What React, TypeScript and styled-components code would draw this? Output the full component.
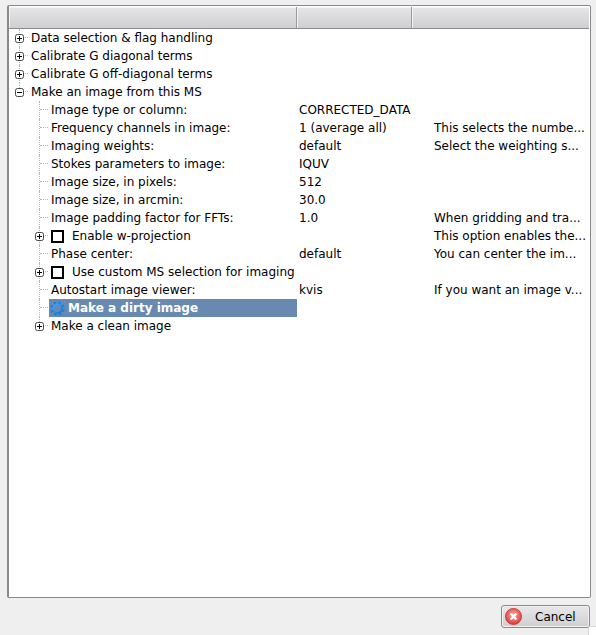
import React from "react";
import styled, { createGlobalStyle } from "styled-components";

const Global = createGlobalStyle`
  html, body { margin: 0; padding: 0; background: #efefef; }
  body { font-family: "DejaVu Sans", sans-serif; font-size: 12px; color: #000; }
`;

const Page = styled.div`
  width: 596px;
  height: 635px;
  box-sizing: border-box;
  padding: 5px 5px 0 7px;
  display: flex;
  flex-direction: column;
  overflow: hidden;
  position: relative;
`;

const Frame = styled.div`
  width: 584px;
  height: 593px;
  box-sizing: border-box;
  border: 1px solid #8a8a8a;
  border-left-width: 2px;
  border-radius: 2px;
  background: #fff;
  display: flex;
  flex-direction: column;
  padding: 1px 1px 0 0;
`;

const Header = styled.div`
  display: grid;
  grid-template-columns: 288px 115px 177px;
  height: 22px;
  flex: none;
  box-sizing: border-box;
  border-bottom: 1px solid #8c8c8c;
  border-right: 1px solid #8c8c8c;
`;

const HeaderCell = styled.div`
  background: linear-gradient(#e6e6e8, #cfcfd2);
  border-right: 1px solid #9a9a9a;
  box-shadow: inset 1px 1px 0 #f4f4f4;
  &:last-child { border-right: none; }
`;

const Body = styled.div`
  display: flex;
  flex-direction: column;
`;

const Row = styled.div`
  display: grid;
  grid-template-columns: 288px 135px 1fr;
  height: 18px;
  white-space: nowrap;
`;

const TreeCell = styled.div<{ $depth: number }>`
  display: flex;
  align-items: center;
  padding-left: ${(p) => (p.$depth === 0 ? 4 : 24)}px;
  position: relative;
`;

const Guide = styled.span<{ $left: number; $last?: boolean }>`
  position: absolute;
  left: ${(p) => p.$left}px;
  top: 0;
  bottom: ${(p) => (p.$last ? "9px" : "0")};
  border-left: 1px dotted #b4b4b4;
`;

const Slot = styled.span`
  width: 14px;
  height: 18px;
  flex: none;
  position: relative;
  display: inline-flex;
  align-items: center;
`;

const Stub = styled.span`
  position: absolute;
  left: 7px;
  width: 8px;
  top: 8px;
  border-top: 1px dotted #b4b4b4;
`;

const Label = styled.span<{ $selected?: boolean }>`
  margin-left: 4px;
  height: 18px;
  display: flex;
  align-items: center;
  flex: 1;
  position: relative;
  ${(p) =>
    p.$selected
      ? `background:#6889b0;color:#fff;font-weight:700;margin-left:2px;padding-left:1px;gap:3px;`
      : ""}
`;

const Check = styled.span`
  width: 9px;
  height: 9px;
  border: 2px solid #000;
  background: #fff;
  display: inline-block;
  margin-right: 8px;
  flex: none;
`;

const Value = styled.div`
  padding-left: 2px;
  display: flex;
  align-items: center;
`;

const Hint = styled.div`
  padding-left: 2px;
  display: flex;
  align-items: center;
`;

const Footer = styled.div`
  display: flex;
  justify-content: flex-end;
  padding: 7px 1px 0 0;
`;

const CancelButton = styled.button`
  width: 89px;
  height: 23px;
  box-sizing: border-box;
  border: 1px solid #8a8a8a;
  border-radius: 3px;
  background: linear-gradient(#e8e8ea, #cfcfd3);
  box-shadow: inset 0 0 0 1px #f2f2f2;
  display: flex;
  align-items: center;
  padding: 0 0 0 3px;
  font: 12px "DejaVu Sans", sans-serif;
  color: #000;
`;

const CancelText = styled.span`
  margin-left: 13px;
`;

const Grip = styled.div`
  position: absolute;
  right: 0;
  bottom: 0;
  width: 7px;
  height: 8px;
  background: #fff;
  border-top: 1px solid #d8d8d8;
  border-left: 1px solid #d8d8d8;
  border-top-left-radius: 2px;
`;

const ExpanderSvg = styled.svg`
  width: 9px;
  height: 9px;
  margin-left: 2px;
  position: relative;
  flex: none;
`;

const IconSvg = styled.svg`
  flex: none;
`;

const Expander = ({ open }: { open?: boolean }) => (
  <ExpanderSvg viewBox="0 0 9 9">
    <rect x="0.5" y="0.5" width="8" height="8" rx="2" fill="#fff" stroke="#444" />
    <path d={open ? "M2 4.5H7" : "M2 4.5H7M4.5 2V7"} stroke="#000" />
  </ExpanderSvg>
);

const GearIcon = () => (
  <IconSvg width="15" height="15" viewBox="0 0 16 16">
    <defs>
      <linearGradient id="gearFill" x1="0" y1="0" x2="1" y2="1">
        <stop offset="0" stopColor="#4cb0f6" />
        <stop offset="1" stopColor="#0f6fd6" />
      </linearGradient>
    </defs>
    <path
      fill="url(#gearFill)"
      fillRule="evenodd"
      d="M8 2.2A5.8 5.8 0 1 1 8 13.8A5.8 5.8 0 1 1 8 2.2ZM8 4.4A3.6 3.6 0 1 0 8 11.6A3.6 3.6 0 1 0 8 4.4Z"
    />
    <g fill="#1b82e4">
      {[20, 65, 110, 155, 200, 245, 290, 335].map((a) => (
        <rect key={a} x="6.5" y="0.3" width="3" height="2.4" transform={`rotate(${a} 8 8)`} />
      ))}
    </g>
  </IconSvg>
);

const CancelIcon = () => (
  <IconSvg width="17" height="17" viewBox="0 0 17 17">
    <defs>
      <radialGradient id="cancelFill" cx="0.5" cy="0.4" r="0.6">
        <stop offset="0" stopColor="#f9a5a0" />
        <stop offset="0.7" stopColor="#ea5a55" />
        <stop offset="1" stopColor="#cf3834" />
      </radialGradient>
    </defs>
    <circle cx="8.5" cy="8.5" r="8" fill="url(#cancelFill)" stroke="#c8403c" />
    <path d="M5.5 5.5L11.5 11.5M11.5 5.5L5.5 11.5" stroke="#fff" strokeWidth="2.4" />
  </IconSvg>
);

type Item = {
  depth: number;
  label: string;
  value?: string;
  hint?: string;
  expander?: "open" | "closed";
  check?: boolean;
  selected?: boolean;
  last?: boolean;
};

const items: Item[] = [
  { depth: 0, label: "Data selection & flag handling", expander: "closed" },
  { depth: 0, label: "Calibrate G diagonal terms", expander: "closed" },
  { depth: 0, label: "Calibrate G off-diagonal terms", expander: "closed" },
  { depth: 0, label: "Make an image from this MS", expander: "open", last: true },
  { depth: 1, label: "Image type or column:", value: "CORRECTED_DATA" },
  { depth: 1, label: "Frequency channels in image:", value: "1 (average all)", hint: "This selects the numbe..." },
  { depth: 1, label: "Imaging weights:", value: "default", hint: "Select the weighting s..." },
  { depth: 1, label: "Stokes parameters to image:", value: "IQUV" },
  { depth: 1, label: "Image size, in pixels:", value: "512" },
  { depth: 1, label: "Image size, in arcmin:", value: "30.0" },
  { depth: 1, label: "Image padding factor for FFTs:", value: "1.0", hint: "When gridding and tra..." },
  { depth: 1, label: "Enable w-projection", expander: "closed", check: true, hint: "This option enables the..." },
  { depth: 1, label: "Phase center:", value: "default", hint: "You can center the im..." },
  { depth: 1, label: "Use custom MS selection for imaging", expander: "closed", check: true },
  { depth: 1, label: "Autostart image viewer:", value: "kvis", hint: "If you want an image v..." },
  { depth: 1, label: "Make a dirty image", selected: true },
  { depth: 1, label: "Make a clean image", expander: "closed", last: true },
];

export default function App() {
  return (
    <Page>
      <Global />
      <Frame>
        <Header>
          <HeaderCell />
          <HeaderCell />
          <HeaderCell />
        </Header>
        <Body>
          {items.map((it) => (
            <Row key={it.label}>
              <TreeCell $depth={it.depth}>
                <Guide $left={it.depth === 0 ? 10 : 30} $last={it.last} />
                <Slot>
                  <Stub />
                  {it.expander && <Expander open={it.expander === "open"} />}
                </Slot>
                <Label $selected={it.selected}>
                  {it.check && <Check />}
                  {it.selected && <GearIcon />}
                  {it.label}
                </Label>
              </TreeCell>
              <Value>{it.value}</Value>
              <Hint>{it.hint}</Hint>
            </Row>
          ))}
        </Body>
      </Frame>
      <Footer>
        <CancelButton>
          <CancelIcon />
          <CancelText>Cancel</CancelText>
        </CancelButton>
      </Footer>
      <Grip />
    </Page>
  );
}
